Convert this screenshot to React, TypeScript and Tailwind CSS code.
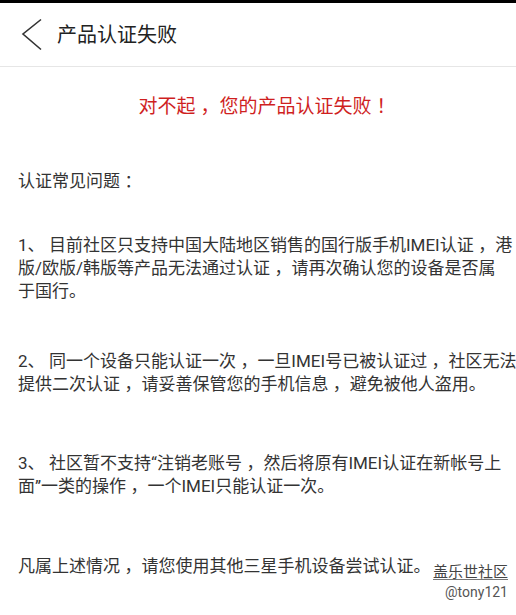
import React from "react";

const font = { fontFamily: '"Roboto", "Noto Sans CJK SC", sans-serif' };

// the phone font leaves a little extra room round full-width punctuation
function Txt({ s }: { s: string }) {
  return (
    <>
      {s.split(/([，：！、])/).map((part, i) =>
        part === "，" || part === "：" || part === "！" ? (
          <span key={i} className="pl-[0.26em]">
            {part}
          </span>
        ) : part === "、" ? (
          <span key={i} className="pr-[0.26em]">
            {part}
          </span>
        ) : (
          part
        )
      )}
    </>
  );
}

function Para({ lines, className = "" }: { lines: string[]; className?: string }) {
  return (
    <div className={className}>
      {lines.map((l) => (
        <div key={l} className="whitespace-nowrap leading-[23px]">
          <Txt s={l} />
        </div>
      ))}
    </div>
  );
}

export default function App() {
  return (
    <div className="relative h-[615px] w-[516px] overflow-hidden bg-white text-[#333]" style={font}>
      <div className="h-[3px] bg-black" />
      <header className="flex h-[64px] items-center border-b border-[#e6e6e6]">
        <svg width="24" height="34" viewBox="0 0 24 34" className="ml-[20px]" aria-hidden>
          <polyline points="21,1.5 3,16 21,31.5" fill="none" stroke="#333" strokeWidth="1.6" />
        </svg>
        <h1 className="ml-[13px] text-[20px] font-normal text-[#222]">产品认证失败</h1>
      </header>

      <main className="pl-[18px] text-[17px]">
        <p className="mt-[28px] text-center text-[19px] leading-[24px] text-[#cf1f1f]">
          <Txt s="对不起，您的产品认证失败！" />
        </p>
        <Para className="mt-[51px]" lines={["认证常见问题："]} />
        <Para
          className="mt-[41px]"
          lines={[
            "1、目前社区只支持中国大陆地区销售的国行版手机IMEI认证，港",
            "版/欧版/韩版等产品无法通过认证，请再次确认您的设备是否属",
            "于国行。",
          ]}
        />
        <Para
          className="mt-[47px]"
          lines={[
            "2、同一个设备只能认证一次，一旦IMEI号已被认证过，社区无法",
            "提供二次认证，请妥善保管您的手机信息，避免被他人盗用。",
          ]}
        />
        <Para
          className="mt-[56px]"
          lines={[
            "3、社区暂不支持“注销老账号，然后将原有IMEI认证在新帐号上",
            "面”一类的操作，一个IMEI只能认证一次。",
          ]}
        />
        <Para className="mt-[57px]" lines={["凡属上述情况，请您使用其他三星手机设备尝试认证。"]} />
      </main>

      <div className="absolute right-[8px] top-[562px] flex flex-col items-end text-[#555]">
        <span className="text-[15px] leading-[20px] text-[#444] underline decoration-[#777] underline-offset-2">
          盖乐世社区
        </span>
        <span className="text-[14px] leading-[20px]">@tony121</span>
      </div>
    </div>
  );
}
